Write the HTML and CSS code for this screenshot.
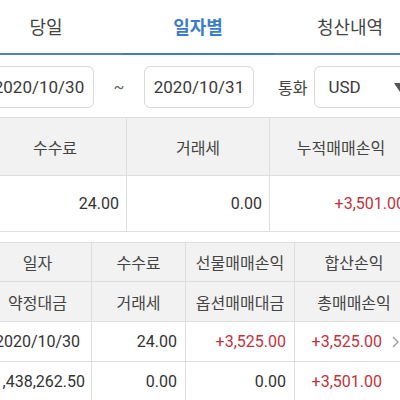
FILE: index.html
```html
<!DOCTYPE html>
<html lang="ko">
<head>
<meta charset="utf-8">
<link rel="stylesheet" href="styles.css">
</head>
<body>
<div class="screen">
  <nav class="tabs">
    <div class="tab">당일</div>
    <div class="tab active">일자별</div>
    <div class="tab">청산내역</div>
  </nav>

  <div class="filter">
    <div class="box date">2020/10/30</div>
    <span class="tilde">~</span>
    <div class="box date">2020/10/31</div>
    <span class="label">통화</span>
    <div class="box select"><span>USD</span><i class="caret"></i></div>
  </div>

  <div class="summary">
    <div class="cell head">수수료</div>
    <div class="cell head">거래세</div>
    <div class="cell head">누적매매손익</div>
    <div class="cell num">24.00</div>
    <div class="cell num">0.00</div>
    <div class="cell num red">+3,501.00</div>
  </div>

  <div class="list">
    <div class="cell head">일자</div>
    <div class="cell head">수수료</div>
    <div class="cell head">선물매매손익</div>
    <div class="cell head">합산손익</div>
    <div class="cell head">약정대금</div>
    <div class="cell head">거래세</div>
    <div class="cell head">옵션매매대금</div>
    <div class="cell head">총매매손익</div>

    <div class="cell center">2020/10/30</div>
    <div class="cell num">24.00</div>
    <div class="cell num red">+3,525.00</div>
    <div class="cell num red last"><span>+3,525.00</span><svg class="chev" width="7" height="12" viewBox="0 0 7 12"><polyline points="1,1 6,6 1,11" fill="none" stroke="#9a9a9a" stroke-width="1.3"/></svg></div>
    <div class="cell num first">1,438,262.50</div>
    <div class="cell num">0.00</div>
    <div class="cell num">0.00</div>
    <div class="cell num red last"><span>+3,501.00</span><i class="chev-space"></i></div>
  </div>
</div>
</body>
</html>
```

FILE: styles.css
```css
html, body {
  margin: 0;
  padding: 0;
  background: #ffffff;
  overflow: hidden;
}

body {
  width: 400px;
  height: 400px;
  font-family: Roboto, "Noto Sans CJK KR", sans-serif;
  color: #333333;
}

.screen {
  width: 460px;
  margin-left: -30px;
}

/* Tabs */
.tabs {
  display: grid;
  grid-template-columns: 152px 152px 152px;
  border-bottom: 2px solid #4a84cc;
  height: 55px;
  box-sizing: border-box;
}

.tab {
  font-size: 18px;
  line-height: 24px;
  padding-top: 16px;
  text-align: center;
  color: #444444;
}

.tab.active {
  color: #3c7dcb;
  font-weight: 700;
  border-bottom: 2px solid #3c7dcb;
  margin-bottom: -2px;
  box-sizing: border-box;
}

/* Filter row */
.filter {
  display: flex;
  align-items: center;
  padding: 11px 0 9px 14px;
  border-bottom: 1px solid #dcdcdc;
  height: 42px;
}

.box {
  height: 42px;
  box-sizing: border-box;
  border: 1px solid #d9d9d9;
  border-radius: 6px;
  font-size: 17px;
  color: #3a3a3a;
  display: flex;
  align-items: center;
}

.date {
  width: 110px;
  justify-content: center;
}

.tilde {
  width: 50px;
  text-align: center;
  font-size: 16px;
  color: #666666;
}

.label {
  margin-left: 24px;
  margin-right: 7px;
  font-size: 16px;
  color: #444444;
}

.select {
  width: 112px;
  padding-left: 13px;
  justify-content: space-between;
  padding-right: 19px;
}

.caret {
  width: 0;
  height: 0;
  border-left: 6px solid transparent;
  border-right: 6px solid transparent;
  border-top: 9px solid #555555;
}

/* Tables */
.cell {
  box-sizing: border-box;
  border-right: 1px solid #dedede;
  border-bottom: 1px solid #dedede;
  display: flex;
  align-items: center;
  font-size: 16px;
  white-space: nowrap;
}

.head {
  background: #f2f2f2;
  justify-content: center;
  font-size: 16px;
  color: #444444;
}

.num {
  justify-content: flex-end;
  padding-right: 7px;
}

.center {
  justify-content: center;
}

.red {
  color: #c1333a;
}

.summary {
  display: grid;
  margin-left: 14px;
  grid-template-columns: 143px 143px 143px;
  grid-template-rows: 58px 56px;
}

.list {
  display: grid;
  margin-left: 14px;
  margin-top: 10px;
  border-top: 1px solid #dedede;
  grid-template-columns: 108px 94px 109px 119px;
  grid-template-rows: 39px 40px 40px 40px;
}

.list .num {
  padding-right: 8px;
}

.list .first {
  padding-right: 6px;
}

.list .last {
  padding-right: 14px;
}

.chev {
  margin-left: 10px;
}

.chev-space {
  display: inline-block;
  width: 17px;
}
```
